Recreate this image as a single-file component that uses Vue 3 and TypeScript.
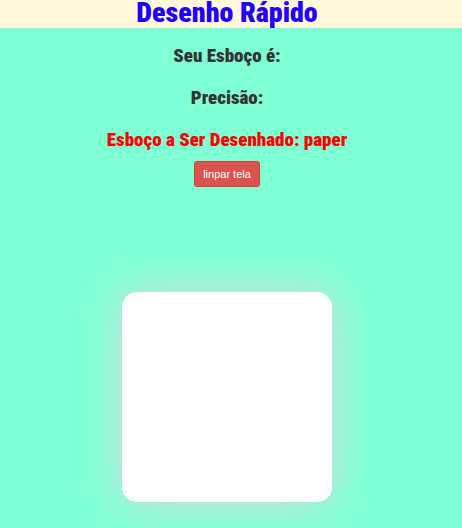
<script setup lang="ts">
import { onMounted, ref } from 'vue'

const sketch = ref('')
const accuracy = ref('')
const target = ref('paper')
const board = ref<HTMLCanvasElement | null>(null)
let drawing = false

function context(): CanvasRenderingContext2D | null {
  return board.value?.getContext('2d') ?? null
}

function clearBoard() {
  const ctx = context()
  if (!ctx || !board.value) return
  ctx.fillStyle = 'white'
  ctx.fillRect(0, 0, board.value.width, board.value.height)
}

function start(event: PointerEvent) {
  drawing = true
  const ctx = context()
  ctx?.beginPath()
  ctx?.moveTo(event.offsetX, event.offsetY)
}

function draw(event: PointerEvent) {
  const ctx = context()
  if (!drawing || !ctx) return
  ctx.lineWidth = 5
  ctx.lineTo(event.offsetX, event.offsetY)
  ctx.stroke()
}

function stop() {
  drawing = false
}

onMounted(clearBoard)
</script>

<template>
  <div class="page">
    <header class="banner">
      <h1>Desenho Rápido</h1>
    </header>
    <main class="content">
      <h2>Seu Esboço é: {{ sketch }}</h2>
      <h2>Precisão: {{ accuracy }}</h2>
      <h2 class="target">Esboço a Ser Desenhado: {{ target }}</h2>
      <button class="clear" type="button" @click="clearBoard">linpar tela</button>
      <canvas
        ref="board"
        class="board"
        width="204"
        height="204"
        @pointerdown="start"
        @pointermove="draw"
        @pointerup="stop"
        @pointerleave="stop"
      ></canvas>
    </main>
  </div>
</template>

<style>
body {
  background: #7fffd4;
}
</style>

<style scoped>
.page {
  min-height: 100vh;
  box-sizing: border-box;
  font-family: Impact, "Roboto Condensed", Roboto, sans-serif;
  text-align: center;
  color: #333;
}

.banner {
  padding: 0 8px 2px 0;
  background: #fff8dc;
}

h1 {
  margin: 0;
  font-size: 28px;
  line-height: 26px;
  font-weight: 900;
  color: #2200ff;
}

.content {
  display: flex;
  flex-direction: column;
  align-items: center;
  padding: 17px 8px 26px 0;
}

h2 {
  margin: 0 0 20px;
  font-size: 19px;
  line-height: 22px;
  font-weight: 900;
}

.target {
  margin-bottom: 10px;
  color: #f00;
}

.clear {
  height: 26px;
  padding: 0 8px;
  border: 1px solid #d43f3a;
  border-radius: 3px;
  background: #d9534f;
  color: #fff;
  font-family: "Liberation Sans", Arial, sans-serif;
  font-size: 11px;
  line-height: 16px;
  cursor: pointer;
}

.board {
  margin-top: 105px;
  border: 3px solid #fff;
  border-radius: 15px;
  box-shadow: 0 0 40px #dcdcdc;
  touch-action: none;
}
</style>
